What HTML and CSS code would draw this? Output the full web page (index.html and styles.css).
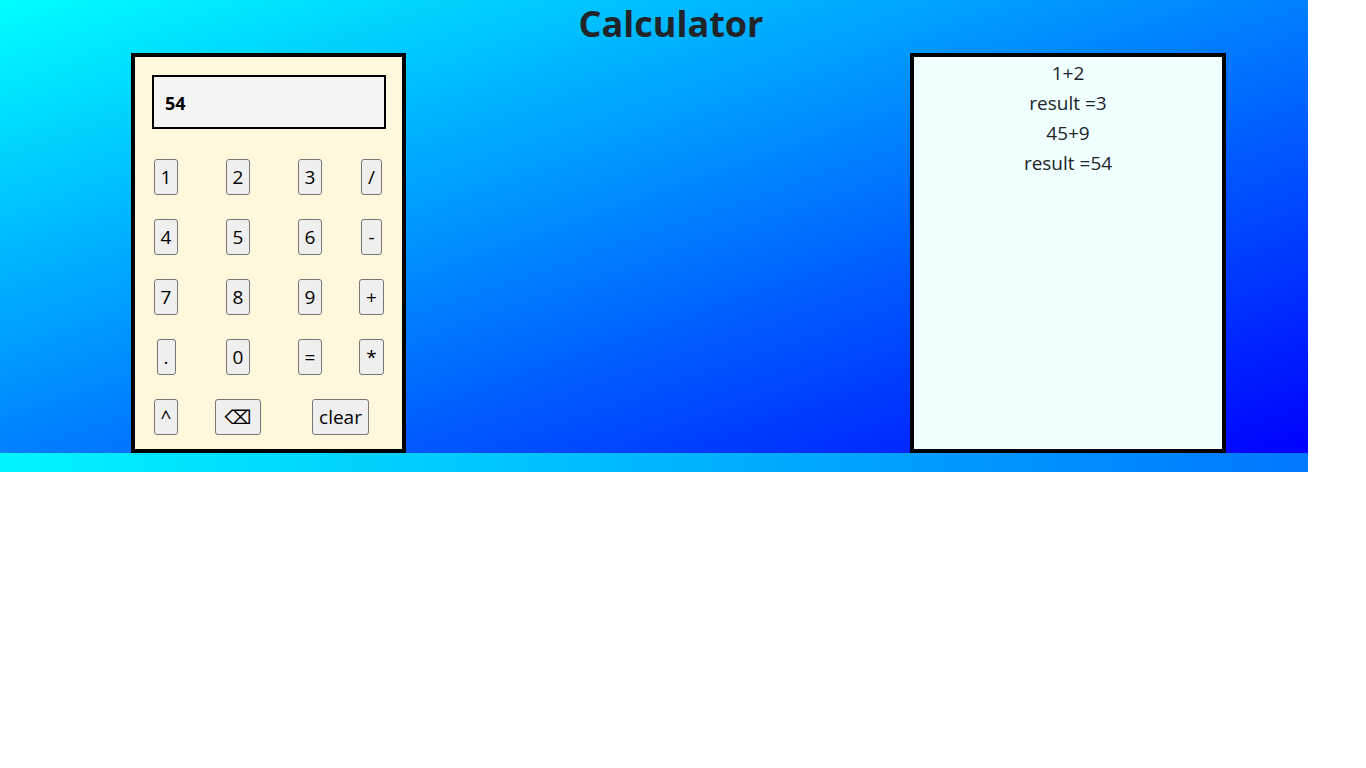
FILE: index.html
```html
<!DOCTYPE html>
<html>
<head>
<meta charset="utf-8">
<title>Calculator</title>
<link rel="stylesheet" href="styles.css">
</head>
<body>
<div class="page">
  <main class="stage">
    <h1 class="title">Calculator</h1>
    <div class="panels">
      <section class="calc">
        <div class="display">54</div>
        <div class="keys">
          <button class="key">1</button>
          <button class="key">2</button>
          <button class="key">3</button>
          <button class="key">/</button>
          <button class="key">4</button>
          <button class="key">5</button>
          <button class="key">6</button>
          <button class="key">-</button>
          <button class="key">7</button>
          <button class="key">8</button>
          <button class="key">9</button>
          <button class="key">+</button>
          <button class="key">.</button>
          <button class="key">0</button>
          <button class="key">=</button>
          <button class="key">*</button>
          <button class="key">^</button>
          <button class="key back">&#x232B;</button>
          <button class="key wide">clear</button>
        </div>
      </section>
      <section class="history">
        <div class="line">1+2</div>
        <div class="line">result =3</div>
        <div class="line">45+9</div>
        <div class="line">result =54</div>
      </section>
    </div>
  </main>
</div>
</body>
</html>
```
FILE: styles.css
```css
* { box-sizing: border-box; }
body {
  margin: 0;
  font-family: "Open Sans", "Noto Sans", sans-serif;
  color: #212529;
  background: #fff;
}
.page {
  width: 1308px;
  padding-bottom: 19px;
  background: linear-gradient(to right, #00f5ff, #0077ff);
}
.stage {
  height: 453px;
  background: linear-gradient(to bottom right, #00ffff, #0000ff);
}
.title {
  margin: 0;
  height: 53px;
  padding-left: 34px;
  text-align: center;
  font-size: 36px;
  line-height: 48px;
  font-weight: 700;
  color: #212529;
}
.panels {
  display: flex;
  justify-content: space-between;
  padding: 0 82px 0 131px;
}
.calc {
  width: 275px;
  height: 400px;
  border: 4px solid #000;
  background: #fff8dc;
  padding: 18px 16px 0 0;
}
.display {
  margin-left: 17px;
  width: 234px;
  height: 54px;
  border: 2px solid #000;
  background: #f4f4f4;
  color: #000;
  font-weight: 700;
  font-size: 18px;
  line-height: 52px;
  padding-left: 11px;
}
.keys {
  margin-top: 30px;
  display: grid;
  grid-template-columns: 62px 82px 62px 61px;
  grid-auto-rows: 36px;
  row-gap: 24px;
  justify-items: center;
}
.key {
  height: 36px;
  padding: 0 6px;
  font-family: "Open Sans", "Noto Sans", "DejaVu Sans", sans-serif;
  font-size: 19px;
  font-weight: 400;
  color: #000;
  background: #efefef;
  border: 1px solid #767676;
  border-radius: 3px;
}
.back { padding: 0 9px; }
.wide { grid-column: span 2; }
.history {
  width: 316px;
  height: 400px;
  border: 4px solid #000;
  background: #f0ffff;
  text-align: center;
  padding-top: 1px;
  font-size: 19px;
}
.line { line-height: 30px; }
```
